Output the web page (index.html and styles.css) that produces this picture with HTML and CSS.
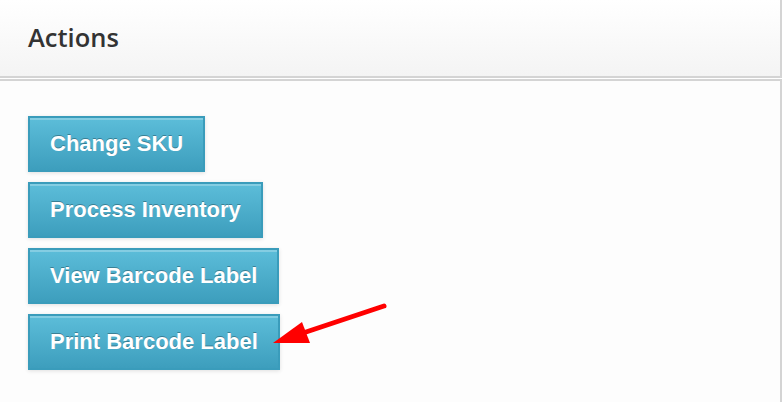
FILE: index.html
```html
<!DOCTYPE html>
<html>
<head>
<meta charset="utf-8">
<link rel="stylesheet" href="styles.css">
</head>
<body>
<div class="page">
  <div class="panel-head">
    <h2 class="title">Actions</h2>
  </div>
  <div class="panel-body">
    <button class="btn">Change SKU</button>
    <button class="btn">Process Inventory</button>
    <button class="btn">View Barcode Label</button>
    <button class="btn">Print Barcode Label</button>
  </div>
  <svg class="arrow" width="782" height="402" viewBox="0 0 782 402">
    <line x1="384" y1="306" x2="300" y2="334" stroke="#ff0000" stroke-width="5" stroke-linecap="round"/>
    <polygon points="273,343 302,322 310,343" fill="#ff0000"/>
  </svg>
</div>
</body>
</html>
```

FILE: styles.css
```css
html, body {
  margin: 0;
  padding: 0;
  background: #ffffff;
}
.page {
  position: relative;
  width: 782px;
  height: 402px;
  overflow: hidden;
}
.panel-head {
  box-sizing: border-box;
  width: 782px;
  height: 78px;
  border-right: 2px solid #d4d4d4;
  border-bottom: 2px solid #d4d4d4;
  background: linear-gradient(#ffffff, #f4f4f4);
  padding-left: 28px;
  display: flex;
  align-items: center;
}
.title {
  margin: 0;
  font-family: "Open Sans", sans-serif;
  font-weight: 600;
  font-size: 25.5px;
  color: #333333;
  padding-bottom: 2px;
}
.panel-body {
  margin-top: 1px;
  width: 782px;
  box-sizing: border-box;
  border-top: 2px solid #d4d4d4;
  border-right: 2px solid #d4d4d4;
  background: #fdfdfd;
  height: 330px;
  padding: 35px 0 0 28px;
  display: flex;
  flex-direction: column;
  align-items: flex-start;
  gap: 10px;
}
.btn {
  height: 56px;
  box-sizing: border-box;
  padding: 0 20px;
  border: 2px solid #3a9cbb;
  background: linear-gradient(#5cbdd9, #3d9ebd);
  box-shadow: inset 0 2px 0 rgba(255,255,255,0.25), 0 1px 4px rgba(0,0,0,0.12);
  color: #ffffff;
  font-family: "Liberation Sans", Arial, sans-serif;
  font-weight: bold;
  font-size: 22px;
  text-shadow: 0 -1px 0 rgba(0,0,0,0.3);
  border-radius: 0;
  cursor: pointer;
}
.arrow {
  position: absolute;
  left: 0;
  top: 0;
  pointer-events: none;
}
```
